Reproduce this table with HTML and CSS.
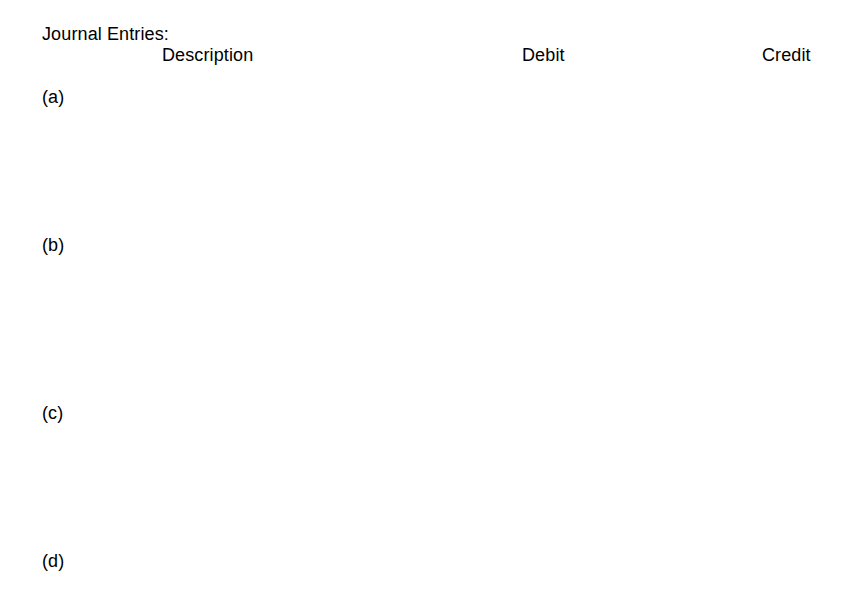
FILE: index.html
```html
<!DOCTYPE html>
<html>
<head>
<meta charset="utf-8">
<link rel="stylesheet" href="styles.css">
</head>
<body>
<div class="page">
  <div class="title">Journal Entries:</div>
  <div class="header">
    <span class="col-label"></span>
    <span class="col-desc">Description</span>
    <span class="col-debit">Debit</span>
    <span class="col-credit">Credit</span>
  </div>
  <div class="entry entry-a">(a)</div>
  <div class="entry entry-b">(b)</div>
  <div class="entry entry-c">(c)</div>
  <div class="entry entry-d">(d)</div>
</div>
</body>
</html>
```

FILE: styles.css
```css
html, body {
  margin: 0;
  padding: 0;
  background: #ffffff;
}
body {
  font-family: "Liberation Sans", Arial, sans-serif;
  font-size: 18px;
  line-height: 21px;
  letter-spacing: 0.12px;
  color: #000000;
}
.page {
  padding: 24px 0 0 42px;
}
.header {
  display: grid;
  grid-template-columns: 120px 360px 240px auto;
}
.entry-a {
  margin-top: 21px;
  height: 148px;
}
.entry-b {
  height: 168px;
}
.entry-c {
  height: 148px;
}
```
